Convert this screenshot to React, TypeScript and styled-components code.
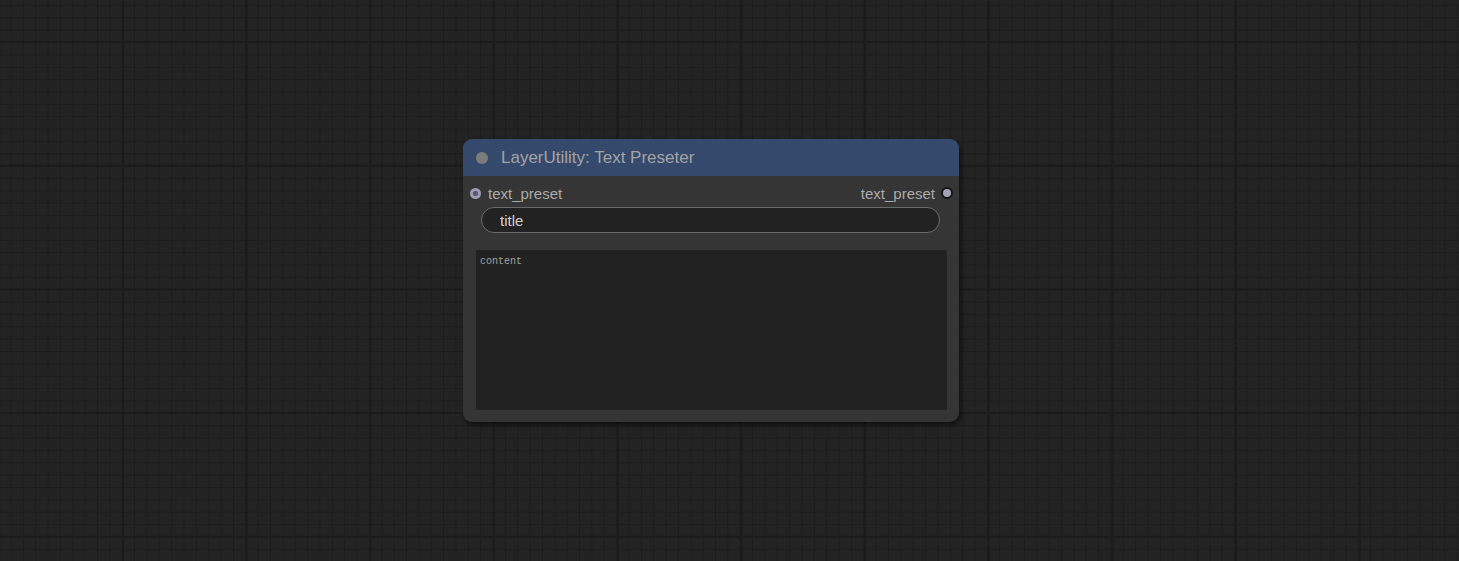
import React from "react";
import styled, { createGlobalStyle } from "styled-components";

const Global = createGlobalStyle`
  html, body { margin: 0; padding: 0; width: 100%; height: 100%; overflow: hidden; }
  #root { width: 100%; height: 100%; }
  * { box-sizing: border-box; }
`;

const Canvas = styled.div`
  position: relative;
  width: 1459px;
  height: 561px;
  background-color: #232323;
  background-image:
    linear-gradient(90deg, #1b1b1b 2px, transparent 2px),
    linear-gradient(180deg, #1b1b1b 2px, transparent 2px),
    linear-gradient(90deg, #1c1c1c 1px, transparent 1px),
    linear-gradient(180deg, #1c1c1c 1px, transparent 1px);
  background-size: 123.7px 123.7px, 123.7px 123.7px, 12.37px 12.37px, 12.37px 12.37px;
  background-position: 122px 41px, 122px 41px, 10.5px 5px, 10.5px 5px;
  font-family: "Liberation Sans", Arial, sans-serif;
`;

const Node = styled.div<{ $x: number; $y: number; $w: number }>`
  position: absolute;
  left: ${(p) => p.$x}px;
  top: ${(p) => p.$y}px;
  width: ${(p) => p.$w}px;
  display: flex;
  flex-direction: column;
  background: #353535;
  border-radius: 9px;
  box-shadow: 2px 3px 5px rgba(0, 0, 0, 0.55);
`;

const Header = styled.div`
  height: 37px;
  display: flex;
  align-items: center;
  gap: 13px;
  padding-left: 13px;
  background: #35496c;
  border-radius: 9px 9px 0 0;
`;

const HeaderDot = styled.span`
  width: 12px;
  height: 12px;
  border-radius: 50%;
  background: #7c7c7c;
`;

const Title = styled.span`
  font-size: 17px;
  color: #a3a3a3;
  line-height: 1;
`;

const Body = styled.div`
  display: flex;
  flex-direction: column;
  padding: 7px 0 12px;
`;

const SlotRow = styled.div`
  height: 20px;
  display: flex;
  align-items: center;
  justify-content: space-between;
  padding: 0 6px 0 7px;
`;

const Slot = styled.div<{ $out?: boolean }>`
  display: flex;
  align-items: center;
  gap: ${(p) => (p.$out ? 6 : 7)}px;
  flex-direction: ${(p) => (p.$out ? "row-reverse" : "row")};
  font-size: 15px;
  color: #aaaaaa;
`;

const SlotDot = styled.span<{ $linked?: boolean }>`
  width: ${(p) => (p.$linked ? 11 : 12)}px;
  height: ${(p) => (p.$linked ? 11 : 12)}px;
  border-radius: 50%;
  background: ${(p) =>
    p.$linked
      ? "radial-gradient(circle, #5c5c70 0 2.4px, #9c9cb6 3px)"
      : "#a3a3b8"};
  border: ${(p) => (p.$linked ? "none" : "2px solid #151515")};
`;

const TextWidget = styled.div`
  margin: 4px 19px 0 18px;
  height: 26px;
  border: 1px solid #6a6a6a;
  border-radius: 13px;
  background: #222222;
  display: flex;
  align-items: center;
  padding-left: 18px;
  font-size: 15px;
  color: #cfcfcf;
`;

const TextArea = styled.div`
  margin: 17px 12px 0 13px;
  height: 160px;
  background: #222222;
  padding: 7px 4px;
  font-family: "Liberation Mono", "DejaVu Sans Mono", monospace;
  font-size: 10px;
  line-height: 1;
  color: #a0a0a0;
`;

export default function App() {
  return (
    <>
      <Global />
      <Canvas>
        <Node $x={463} $y={139} $w={496}>
          <Header>
            <HeaderDot />
            <Title>LayerUtility: Text Preseter</Title>
          </Header>
          <Body>
            <SlotRow>
              <Slot>
                <SlotDot $linked />
                <span>text_preset</span>
              </Slot>
              <Slot $out>
                <SlotDot />
                <span>text_preset</span>
              </Slot>
            </SlotRow>
            <TextWidget>title</TextWidget>
            <TextArea>content</TextArea>
          </Body>
        </Node>
      </Canvas>
    </>
  );
}
